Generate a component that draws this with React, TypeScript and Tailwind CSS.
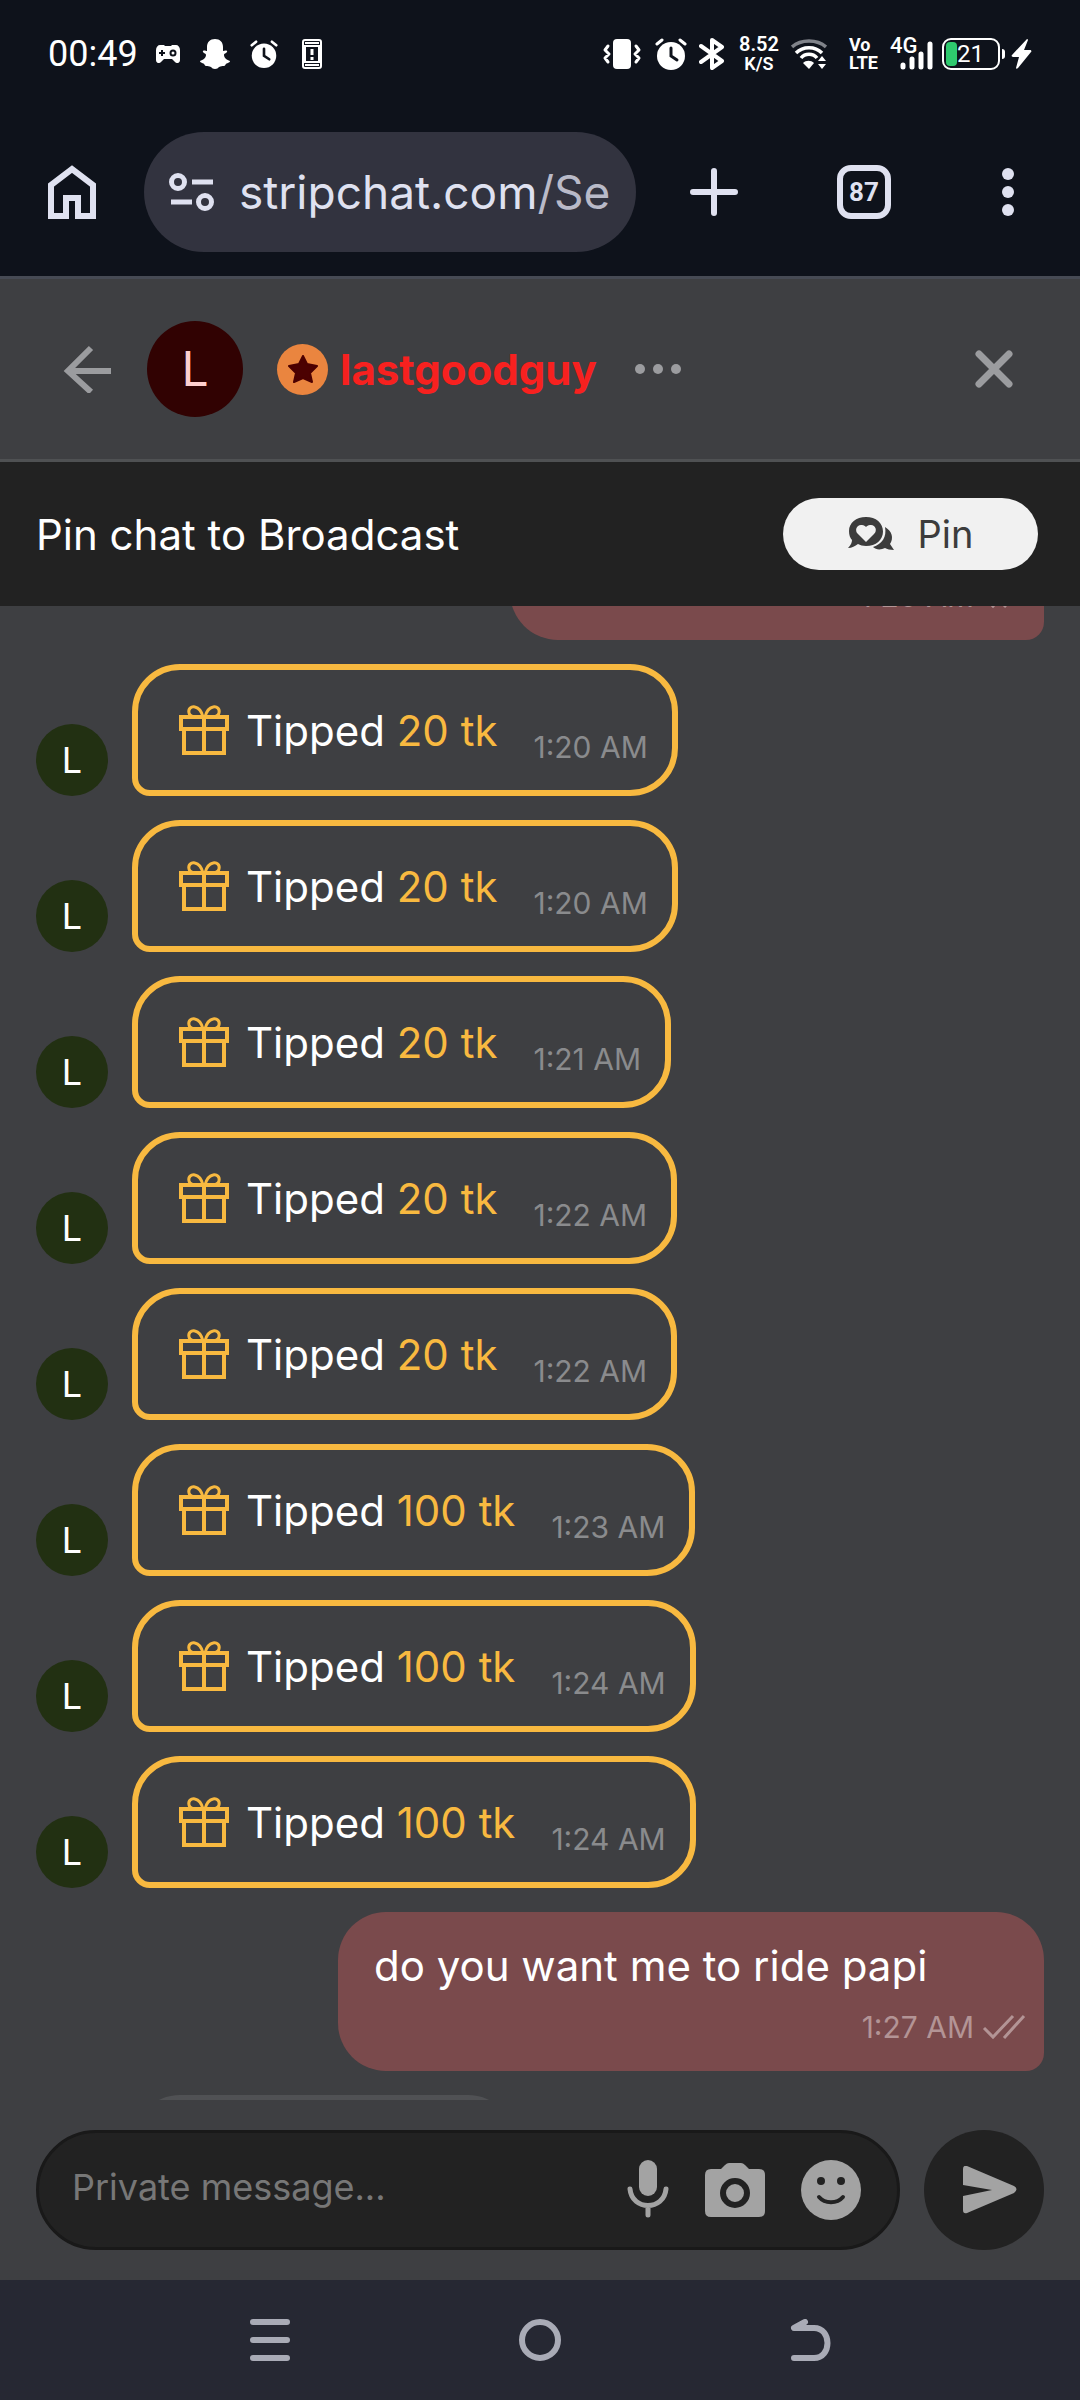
import type { ReactNode } from 'react';

type Tip = { id: number; amount: number; time: string };

const tips: Tip[] = [
  { id: 1, amount: 20, time: '1:20 AM' },
  { id: 2, amount: 20, time: '1:20 AM' },
  { id: 3, amount: 20, time: '1:21 AM' },
  { id: 4, amount: 20, time: '1:22 AM' },
  { id: 5, amount: 20, time: '1:22 AM' },
  { id: 6, amount: 100, time: '1:23 AM' },
  { id: 7, amount: 100, time: '1:24 AM' },
  { id: 8, amount: 100, time: '1:24 AM' },
];

function AlarmIcon({ className }: { className?: string }) {
  return (
    <svg viewBox="0 0 32 32" className={className} fill="none" stroke="currentColor" strokeLinecap="round">
      <circle cx="16" cy="18" r="14" fill="currentColor" stroke="none" />
      <path d="M2 6 7 2M25 2l5 4" strokeWidth="3" />
      <path d="M16 10v8l6 4" stroke="#0e121b" strokeWidth="3" />
    </svg>
  );
}

function GiftIcon() {
  return (
    <svg viewBox="0 0 52 52" className="size-[52px] shrink-0" fill="none" stroke="currentColor" strokeWidth="4">
      <rect x="3" y="13" width="46" height="12" />
      <path d="M6 25v24h40V25M26 13v36" />
      <path d="M25 13C20 13 12 14 11 9c-1-4 2-7 6-6 5 1 7 6 8 10ZM27 13c5 0 13 1 14-4 1-4-2-7-6-6-5 1-7 6-8 10Z" strokeWidth="3" />
    </svg>
  );
}

function DoubleCheck() {
  return (
    <svg viewBox="0 0 44 26" className="h-[26px] w-[44px]" fill="none" stroke="currentColor" strokeWidth="3">
      <path d="m2 14 9 9L31 2M22 24 42 2" />
    </svg>
  );
}

function StatusBar() {
  return (
    <div className="flex h-[108px] items-center justify-between px-12 font-['Roboto',sans-serif] text-white">
      <div className="flex items-center">
        <span className="text-4xl">00:49</span>
        <svg viewBox="0 0 24 18" className="ml-[18px] h-[18px] w-6">
          <path fill="currentColor" d="M4 0h4l1 1h6l1-1h4c2 0 4 2 4 5v10c0 3-3 4-5 2l-3-3H8l-3 3c-2 2-5 1-5-2V5C0 2 2 0 4 0Z" />
          <path d="M3 8h6M6 5v6" stroke="#0e121b" strokeWidth="2" />
          <circle cx="17" cy="8" r="2.5" fill="none" stroke="#0e121b" strokeWidth="2" />
        </svg>
        <svg viewBox="0 0 30 30" className="ml-5 size-[30px]" fill="currentColor">
          <path d="M15 0c5 0 8 3 8 8v4c1 0 3-1 4 0 1 2-3 2-3 4 0 3 3 5 6 6 0 2-4 2-4 3-1 1-1 2-2 2-2 0-3 0-5 1-1 1-2 2-4 2s-3-1-4-2c-2-1-3-1-5-1-1 0-1-1-2-2 0-1-4-1-4-3 3-1 6-3 6-6 0-2-4-2-3-4 1-1 3 0 4 0V8c0-5 3-8 8-8Z" />
        </svg>
        <AlarmIcon className="ml-5 size-7" />
        <svg viewBox="0 0 20 30" className="ml-6 h-[30px] w-5" fill="none" stroke="currentColor" strokeWidth="2">
          <rect x="1" y="1" width="18" height="28" rx="2" />
          <path d="M3 4h14M3 26h14" />
          <rect x="3" y="7" width="14" height="16" />
          <path d="M10 10v6M10 18v3" strokeWidth="3" />
        </svg>
      </div>
      <div className="flex items-center">
        <svg viewBox="0 0 38 30" className="h-[30px] w-[38px]" fill="none" stroke="currentColor" strokeWidth="3" strokeLinecap="round" strokeLinejoin="round">
          <rect x="10" y="0" width="18" height="30" rx="4" fill="currentColor" stroke="none" />
          <path d="m5 7-3 4 4 4-4 4 3 4M33 7l3 4-4 4 4 4-3 4" strokeWidth="3" />
        </svg>
        <AlarmIcon className="ml-3.5 size-8" />
        <svg viewBox="0 0 26 32" className="ml-3 h-8 w-[26px]" fill="none" stroke="currentColor" strokeWidth="4" strokeLinecap="round" strokeLinejoin="round">
          <path d="m2 8 21 15-10 7V2l10 7L2 24" />
        </svg>
        <div className="ml-3.5 flex w-10 flex-col items-center font-semibold">
          <span className="text-xl leading-5">8.52</span>
          <span className="text-lg leading-5">K/S</span>
        </div>
        <svg viewBox="0 0 36 30" className="ml-3 h-[30px] w-9" fill="none" stroke="currentColor" strokeWidth="3.5">
          <path d="M1 8c9-8 25-8 34 0" stroke="#80838a" />
          <path d="M5 14c7-7 19-7 26 0M10 19c4-5 12-5 16 0" />
          <path d="M12 24c3-3 8-3 11 0l-5 6Z" fill="currentColor" stroke="none" />
          <path d="m31 17 4 5h-8ZM31 30l-4-5h8Z" fill="currentColor" stroke="none" />
        </svg>
        <div className="ml-[22px] flex flex-col text-lg font-bold">
          <span className="leading-[18px]">Vo</span>
          <span className="leading-[18px]">LTE</span>
        </div>
        <div className="relative ml-3 h-8 w-11">
          <span className="absolute top-0 left-0 text-[22px] leading-4 font-medium">4G</span>
          <svg viewBox="0 0 44 32" className="size-full" stroke="currentColor" strokeWidth="5" strokeLinecap="round">
            <path d="M13 27v2M22 21v8M31 16v13M40 6v23" />
          </svg>
        </div>
        <div className="ml-2 flex h-8 w-[58px] items-center rounded-[9px] border-2 border-white pl-0.5">
          <span className="h-6 w-[11px] rounded-[4px] bg-[#2ec96e]" />
          <span className="text-2xl leading-6">21</span>
        </div>
        <span className="ml-0.5 h-2.5 w-[3px] rounded-r bg-white" />
        <svg viewBox="0 0 21 30" className="ml-1.5 h-[30px] w-[21px]" fill="currentColor">
          <path d="M16 0 1 16c-1 1 0 2 1 2h6L5 29c0 1 1 1 2 0L20 13c1-1 0-2-1-2h-6l4-10c0-1-1-1-1-1Z" />
        </svg>
      </div>
    </div>
  );
}

function BrowserBar() {
  return (
    <div className="flex h-[171px] items-center border-b-3 border-[#464a54] pr-[66px] pl-12 text-[#dfe1f0]">
      <button aria-label="Home">
        <svg viewBox="0 0 48 54" className="h-[54px] w-12" fill="none" stroke="currentColor" strokeWidth="6">
          <path d="M3 20v31h15V33h12v18h15V20L24 4Z" />
        </svg>
      </button>
      <button aria-label="Address bar" className="ml-12 flex h-[120px] flex-1 items-center rounded-full bg-[#32333f] pl-[25px]">
        <svg viewBox="0 0 46 40" className="h-10 w-[46px] shrink-0" fill="none" stroke="currentColor" strokeWidth="5">
          <circle cx="9" cy="10" r="6.5" />
          <circle cx="36" cy="30" r="6.5" />
          <path d="M23 10h21M2 30h21" />
        </svg>
        <span className="ml-6 font-['Inter',sans-serif] text-[46px] whitespace-nowrap">
          stripchat.com<span className="text-[#b9bac8]">/Se</span>
        </span>
      </button>
      <button aria-label="New tab" className="ml-[54px]">
        <svg viewBox="0 0 48 48" className="size-12" stroke="currentColor" strokeWidth="6" strokeLinecap="round">
          <path d="M24 3v42M3 24h42" />
        </svg>
      </button>
      <button className="ml-[99px] flex h-[54px] w-[54px] items-center justify-center rounded-[14px] border-6 border-current font-['Roboto',sans-serif] text-[26px] font-bold">
        87
      </button>
      <button aria-label="Menu" className="ml-[111px] flex flex-col gap-1.5">
        <span className="size-3 rounded-full bg-current" />
        <span className="size-3 rounded-full bg-current" />
        <span className="size-3 rounded-full bg-current" />
      </button>
    </div>
  );
}

function ChatHeader() {
  return (
    <header className="flex h-[183px] items-center border-b-3 border-[#4f5153] pr-[66px] pl-[63px] text-[#9b9c9f]">
      <button aria-label="Back">
        <svg viewBox="0 0 48 48" className="size-12" fill="none" stroke="currentColor" strokeWidth="6">
          <path d="M4 26h44M28 3 5 26l23 21" />
        </svg>
      </button>
      <div className="ml-9 flex size-24 items-center justify-center rounded-full bg-[#310202] text-5xl text-[#ffcfcf]">L</div>
      <span className="ml-[34px] flex size-[51px] items-center justify-center rounded-full bg-[#ea853f]">
        <svg viewBox="0 0 30 28" className="h-7 w-[30px]" fill="#4c0101" stroke="#4c0101" strokeWidth="2" strokeLinejoin="round">
          <path d="m15 1 4 8 10 2-7 7 2 9-9-4-9 4 2-9-7-7 10-2Z" />
        </svg>
      </span>
      <h1 className="ml-3 text-[42px] font-bold text-[#f7211f]">lastgoodguy</h1>
      <button aria-label="More" className="ml-[38px] flex gap-2">
        <span className="size-2.5 rounded-full bg-current" />
        <span className="size-2.5 rounded-full bg-current" />
        <span className="size-2.5 rounded-full bg-current" />
      </button>
      <button aria-label="Close" className="ml-auto">
        <svg viewBox="0 0 40 40" className="size-10" stroke="currentColor" strokeWidth="7" strokeLinecap="round">
          <path d="m5 5 30 30M35 5 5 35" />
        </svg>
      </button>
    </header>
  );
}

function PinBar() {
  return (
    <div className="flex h-36 items-center justify-between bg-[#222222] pr-[42px] pl-9">
      <span className="text-[42px] text-white">Pin chat to Broadcast</span>
      <button className="flex h-[72px] w-[255px] items-center justify-center gap-6 rounded-full bg-[#f1f1f1] text-[38px] text-[#3c3c3c]">
        <svg viewBox="0 0 46 34" className="h-[34px] w-[46px]" fill="currentColor">
          <path d="M37 10c7 4 9 11 5 17l4 6c-4 0-7-1-9-2-4 2-9 2-12-1 9-3 14-10 12-20Z" />
          <path d="M18 0c10 0 17 6 17 14.500S28 29 18 29c-3 0-6-1-8-2-3 2-6 4-10 4 3-3 4-6 4-8-2-2-3-5-3-9C1 6 8 0 18 0Z" />
          <path fill="#f1f1f1" d="M18 25 10 17c-4-4-1-10 4-9 2 0 3 1 4 2 1-1 2-2 4-2 5-1 8 5 4 9Z" />
        </svg>
        Pin
      </button>
    </div>
  );
}

function TipRow({ tip }: { tip: Tip }) {
  return (
    <li className="flex shrink-0 items-end gap-6">
      <div className="flex size-[72px] items-center justify-center rounded-full bg-[#223012] text-4xl text-white">L</div>
      <div className="flex h-[132px] items-center rounded-[48px] rounded-bl-[18px] border-6 border-[#f8b940] pr-6 pl-10 text-[#f8b940]">
        <GiftIcon />
        <p className="ml-4 text-[42px] whitespace-nowrap">
          <span className="text-white">Tipped</span> {tip.amount} tk
        </p>
        <time className="ml-9 pt-[34px] text-3xl whitespace-nowrap text-[#8a8b8d]">{tip.time}</time>
      </div>
    </li>
  );
}

function SentBubble({ time, className, children }: { time: string; className?: string; children?: ReactNode }) {
  return (
    <li className={`ml-auto shrink-0 rounded-[48px] rounded-br-[18px] bg-[#7a4a4c] pt-[30px] pr-[18px] pb-5 pl-9 ${className ?? ''}`}>
      <p className="h-[61px] text-[42px] leading-[48px] text-white">{children}</p>
      <div className="flex items-center justify-end gap-2 text-3xl leading-[48px] text-[#b39495]">
        <time>{time}</time>
        <DoubleCheck />
      </div>
    </li>
  );
}

function Composer() {
  return (
    <form className="flex items-center gap-6 px-9 py-[30px] text-[#a3a3a3]" onSubmit={(e) => e.preventDefault()}>
      <div className="flex h-[120px] min-w-0 flex-1 items-center rounded-full border-3 border-[#191919] bg-[#222222] pr-9 pl-[33px]">
        <input
          type="text"
          aria-label="Private message"
          placeholder="Private message..."
          className="h-full min-w-0 flex-1 bg-transparent pb-1.5 text-4xl leading-[48px] text-white outline-none placeholder:text-[#777777]"
        />
        <button type="button" aria-label="Record voice">
          <svg viewBox="0 0 42 60" className="h-[60px] w-[42px]" fill="none" stroke="currentColor" strokeWidth="5" strokeLinecap="round">
            <rect x="12" y="0" width="18" height="36" rx="9" fill="currentColor" stroke="none" />
            <path d="M3 29c2 22 34 22 36 0M21 46v9" />
          </svg>
        </button>
        <button type="button" aria-label="Send photo" className="ml-9">
          <svg viewBox="0 0 60 60" className="size-[60px]">
            <path fill="currentColor" d="m16 9 4-4q2-2 4-2h12q2 0 4 2l4 4h10q6 0 6 6v36q0 6-6 6H6q-6 0-6-6V15q0-6 6-6Z" />
            <circle cx="30" cy="33" r="12" fill="none" stroke="#222222" strokeWidth="6" />
          </svg>
        </button>
        <button type="button" aria-label="Emoji" className="ml-9">
          <svg viewBox="0 0 60 60" className="size-[60px]">
            <circle cx="30" cy="30" r="30" fill="currentColor" />
            <circle cx="20" cy="21" r="4" fill="#222222" />
            <circle cx="40" cy="21" r="4" fill="#222222" />
            <path d="M18 37c6 7 18 7 24 0" fill="none" stroke="#222222" strokeWidth="4" strokeLinecap="round" />
          </svg>
        </button>
      </div>
      <button type="submit" aria-label="Send" className="flex size-[120px] items-center justify-center rounded-full bg-[#222222] pl-3">
        <svg viewBox="0 0 54 48" className="h-12 w-[54px]" fill="currentColor">
          <path d="M0 3q0-4 4-3l47 20q5 3 0 7L4 47q-4 1-4-3V30l29-6-29-5Z" />
        </svg>
      </button>
    </form>
  );
}

function NavBar() {
  return (
    <nav className="grid h-[120px] grid-cols-3 items-center bg-[#262833] px-[12.5%] text-[#a9abb6]">
      <button aria-label="Recent apps">
        <svg viewBox="0 0 42 42" className="mx-auto size-[42px]" stroke="currentColor" strokeWidth="6" strokeLinecap="round">
          <path d="M4 3h34M4 21h34M4 39h34" />
        </svg>
      </button>
      <button aria-label="Home screen">
        <span className="mx-auto block size-[42px] rounded-full border-6 border-current" />
      </button>
      <button aria-label="Go back">
        <svg viewBox="0 0 42 42" className="mx-auto size-[42px]" fill="none" stroke="currentColor" strokeWidth="6" strokeLinecap="round" strokeLinejoin="round">
          <path d="M16 3 5 9h20c18 0 18 30 0 30H5" />
        </svg>
      </button>
    </nav>
  );
}

export default function App() {
  return (
    <div className="flex h-screen flex-col bg-[#3e3f42] font-['Inter',sans-serif]">
      <div className="bg-[#0e121b]">
        <StatusBar />
        <BrowserBar />
      </div>
      <ChatHeader />
      <PinBar />
      <main className="min-h-0 flex-1 overflow-hidden">
        <ul className="-mt-[125px] flex flex-col gap-6 px-9">
          <SentBubble time="1:20 AM" className="w-[534px]" />
          {tips.map((tip) => (
            <TipRow key={tip.id} tip={tip} />
          ))}
          <SentBubble time="1:27 AM" className="w-[706px]">
            do you want me to ride papi
          </SentBubble>
          <li className="ml-24 h-[120px] w-[384px] shrink-0 rounded-[48px] rounded-bl-[18px] bg-[#505154]" />
        </ul>
      </main>
      <Composer />
      <NavBar />
    </div>
  );
}
